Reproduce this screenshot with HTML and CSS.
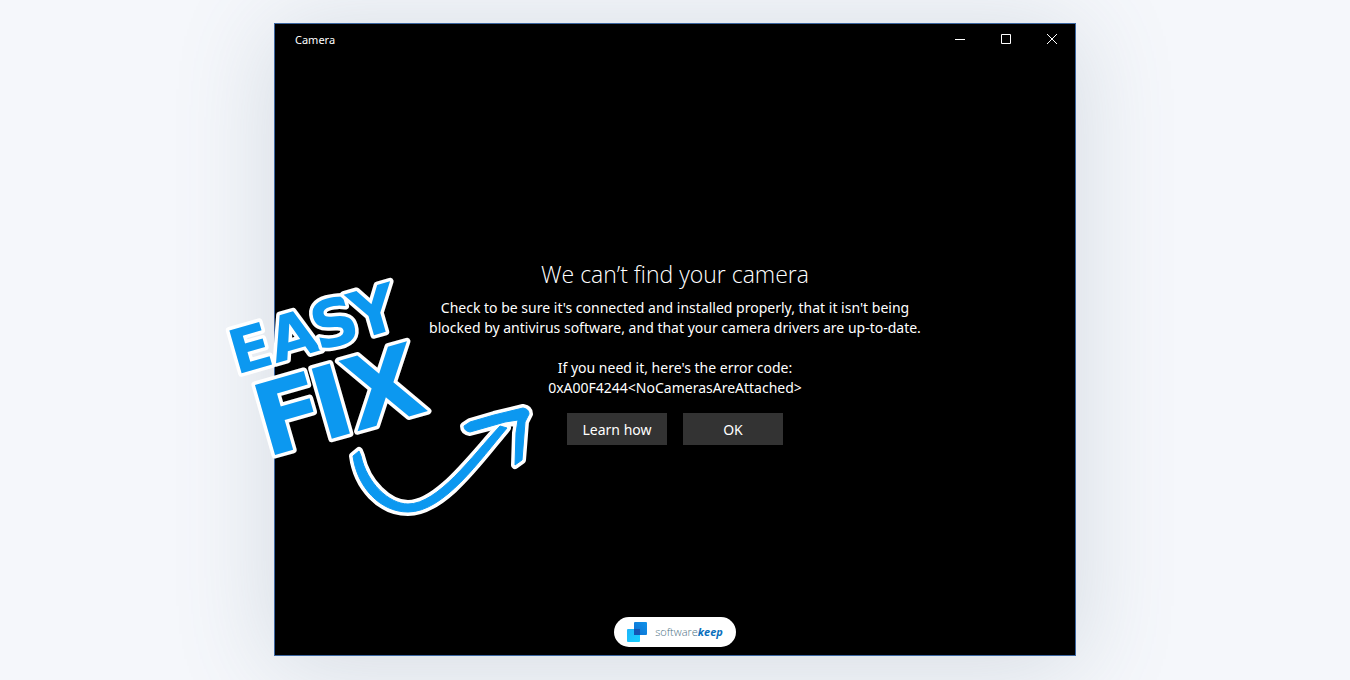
FILE: index.html
```html
<!DOCTYPE html>
<html lang="en">
<head>
<meta charset="utf-8">
<meta name="viewport" content="width=device-width, initial-scale=1">
<title>Camera</title>
<link rel="stylesheet" href="styles.css">
</head>
<body class="page">
<main class="window">
  <header class="titlebar">
    <span class="titlebar-name">Camera</span>
    <div class="titlebar-controls">
      <button class="control" type="button" aria-label="Minimize"><svg width="12" height="12" viewBox="0 0 12 12"><path d="M1 6.5h10"/></svg></button>
      <button class="control" type="button" aria-label="Maximize"><svg width="12" height="12" viewBox="0 0 12 12"><path d="M1.5 1.5h9v9h-9z"/></svg></button>
      <button class="control" type="button" aria-label="Close"><svg width="12" height="12" viewBox="0 0 12 12"><path d="M1 1l10 10M11 1L1 11"/></svg></button>
    </div>
  </header>
  <section class="stage">
    <div class="dialog">
      <h1 class="dialog-title">We can’t find your camera</h1>
      <p class="dialog-text">Check to be sure it's connected and installed properly, that it isn't being<br>blocked by antivirus software, and that your camera drivers are up-to-date.</p>
      <p class="dialog-text">If you need it, here's the error code:<br>0xA00F4244&lt;NoCamerasAreAttached&gt;</p>
      <div class="dialog-actions">
        <button class="action" type="button">Learn how</button>
        <button class="action" type="button">OK</button>
      </div>
      <svg class="sticker" width="330" height="280" viewBox="215 255 330 280">
        <g class="lettering" transform="translate(242 374) rotate(-16)">
          <text y="0"><tspan x="-6" font-size="61">E</tspan><tspan x="35" font-size="62">A</tspan><tspan x="79" font-size="65">S</tspan><tspan x="120" font-size="65">Y</tspan></text>
        </g>
        <g class="lettering" transform="translate(275 456) rotate(-16)">
          <text y="0" font-size="100"><tspan x="-9">F</tspan><tspan x="50">I</tspan><tspan x="84">X</tspan></text>
        </g>
        <g class="arrow-outline">
          <path d="M353 457L359 452L361 457C367 484 389 505 408 505C438 505 472 457 500 427L507 429C480 461 444 513 408 513C380 513 357 488 353 457Z"/>
          <path d="M464 427L470 423L494 416L523 409Q529 410 529 415L525 423L522 461L515 466L516 434L518 423L505 424L470 433Q464 432 464 427Z"/>
        </g>
        <g class="arrow-fill">
          <path d="M353 457L359 452L361 457C367 484 389 505 408 505C438 505 472 457 500 427L507 429C480 461 444 513 408 513C380 513 357 488 353 457Z"/>
          <path d="M464 427L470 423L494 416L523 409Q529 410 529 415L525 423L522 461L515 466L516 434L518 421L505 423L470 433Q464 432 464 427Z"/>
        </g>
      </svg>
    </div>
  </section>
  <footer class="footer">
    <a class="brand" href="#">
      <svg width="20" height="20" viewBox="0 0 20 20">
        <defs>
          <linearGradient id="sky" x1="0" y1="0" x2="1" y2="1"><stop offset="0" stop-color="#20b4fa"/><stop offset="1" stop-color="#16d0ff"/></linearGradient>
          <linearGradient id="deep" x1="0" y1="1" x2="1" y2="0"><stop offset="0" stop-color="#0e6fd0"/><stop offset="1" stop-color="#1093ea"/></linearGradient>
        </defs>
        <rect x="0" y="7" width="13" height="13" rx="1" fill="url(#sky)"/>
        <rect x="7" y="0" width="13" height="13" rx="1" fill="url(#deep)"/>
        <rect x="7" y="7" width="6" height="6" fill="#1455b4"/>
      </svg>
      <span class="brand-name">software<b class="brand-strong">keep</b></span>
    </a>
  </footer>
</main>
</body>
</html>
```
FILE: styles.css
```css
* {
  box-sizing: border-box;
}

.page {
  margin: 0;
  min-height: 100vh;
  padding: 23px 24px 24px;
  display: flex;
  justify-content: center;
  overflow-x: hidden;
  background: #f5f7fb;
  color: #fff;
  font-family: "Noto Sans", "Open Sans", sans-serif;
}

.window {
  flex: 1;
  max-width: 802px;
  display: flex;
  flex-direction: column;
  background: #000;
  border: 1px solid #3c66a0;
  box-shadow: 0 8px 92px 2px rgba(92, 115, 132, 0.2);
}

.titlebar {
  display: flex;
  align-items: center;
  justify-content: space-between;
  height: 30px;
  padding-left: 20px;
  font-size: 11px;
}

.titlebar-controls {
  display: flex;
}

.control {
  display: grid;
  place-items: center;
  width: 46px;
  height: 30px;
  padding: 0;
  border: 0;
  background: none;
}

.control path {
  fill: none;
  stroke: #fff;
  stroke-width: 1;
}

.stage {
  flex: 1;
  display: flex;
  align-items: center;
  justify-content: center;
  padding-top: 32px;
}

.dialog {
  position: relative;
  display: flex;
  flex-direction: column;
  width: 100%;
  max-width: 500px;
  text-align: center;
}

.dialog-title {
  margin: 0 0 8px;
  font-family: "Open Sans", sans-serif;
  font-size: 23px;
  line-height: 32px;
  font-weight: 300;
}

.dialog-text {
  margin: 0 0 20px;
  font-size: 14px;
  line-height: 20px;
}

.dialog-actions {
  display: flex;
  justify-content: center;
  gap: 16px;
  margin-top: -5px;
}

.action {
  width: 100px;
  height: 32px;
  padding: 0;
  border: 0;
  background: #333;
  color: #fff;
  font: inherit;
  font-size: 14px;
}

.sticker {
  position: absolute;
  left: -210px;
  top: -4px;
  overflow: visible;
  pointer-events: none;
}

.lettering {
  font-family: "DejaVu Sans", sans-serif;
  font-weight: 700;
  fill: #0c98f0;
  stroke: #fff;
  stroke-width: 7;
  stroke-linejoin: round;
  paint-order: stroke;
}

.arrow-outline {
  fill: #fff;
  stroke: #fff;
  stroke-width: 8;
  stroke-linejoin: round;
}

.arrow-fill {
  fill: #0c98f0;
  stroke: #0c98f0;
  stroke-width: 1;
}

.footer {
  display: flex;
  justify-content: center;
  padding-bottom: 8px;
}

.brand {
  display: flex;
  align-items: center;
  gap: 8px;
  height: 30px;
  padding: 0 13px;
  border-radius: 15px;
  background: #fff;
  color: #4e7184;
  text-decoration: none;
}

.brand-name {
  font-family: "Open Sans", sans-serif;
  font-size: 11px;
  line-height: 16px;
  font-weight: 300;
}

.brand-strong {
  color: #0a70bd;
  font-weight: 700;
  font-style: italic;
}
```
